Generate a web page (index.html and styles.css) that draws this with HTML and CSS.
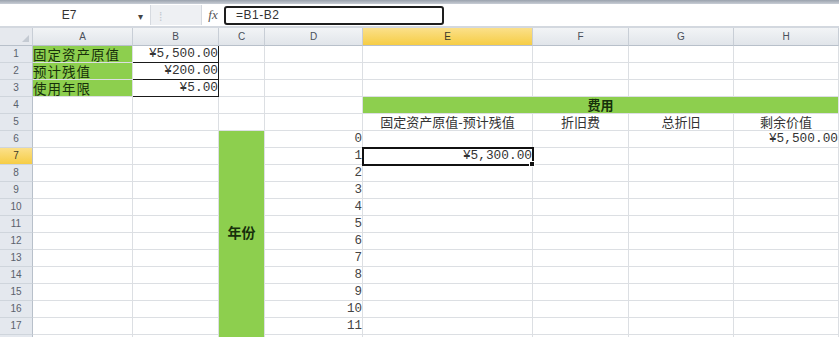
FILE: index.html
```html
<!DOCTYPE html>
<html lang="zh-CN">
<head>
    <meta charset="UTF-8">
    <meta name="viewport" content="width=device-width, initial-scale=1.0">
    <title>固定资产折旧</title>
    <link rel="stylesheet" href="styles.css">
</head>
<body>
    <div class="ribbon-edge"></div>

    <div class="formula-bar">
        <div class="name-box">E7</div>
        <div class="name-arrow">▾</div>
        <div class="fx-tools"><span class="grip">⁞</span></div>
        <div class="fx">fx</div>
        <div class="formula-input">=B1-B2</div>
    </div>

    <table class="sheet">
        <colgroup>
            <col class="c-head">
            <col class="c-a">
            <col class="c-b">
            <col class="c-c">
            <col class="c-d">
            <col class="c-e">
            <col class="c-f">
            <col class="c-g">
            <col class="c-h">
        </colgroup>
        <thead>
            <tr>
                <th class="corner"><span class="corner-mark"></span></th>
                <th>A</th><th>B</th><th>C</th><th>D</th>
                <th class="active">E</th><th>F</th><th>G</th><th>H</th>
            </tr>
        </thead>
        <tbody>
            <tr><th>1</th><td class="label">固定资产原值</td><td class="money boxed">¥5,500.00</td><td></td><td></td><td></td><td></td><td></td><td></td></tr>
            <tr><th>2</th><td class="label">预计残值</td><td class="money boxed">¥200.00</td><td></td><td></td><td></td><td></td><td></td><td></td></tr>
            <tr><th>3</th><td class="label">使用年限</td><td class="money boxed">¥5.00</td><td></td><td></td><td></td><td></td><td></td><td></td></tr>
            <tr><th>4</th><td></td><td></td><td></td><td></td><td class="band" colspan="4">费用</td></tr>
            <tr><th>5</th><td></td><td></td><td></td><td></td><td class="caption">固定资产原值-预计残值</td><td class="caption">折旧费</td><td class="caption">总折旧</td><td class="caption">剩余价值</td></tr>
            <tr><th>6</th><td></td><td></td><td class="year" rowspan="13">年份</td><td class="num">0</td><td></td><td></td><td></td><td class="money">¥5,500.00</td></tr>
            <tr><th class="active">7</th><td></td><td></td><td class="num">1</td><td class="money sel">¥5,300.00</td><td></td><td></td><td></td></tr>
            <tr><th>8</th><td></td><td></td><td class="num">2</td><td></td><td></td><td></td><td></td></tr>
            <tr><th>9</th><td></td><td></td><td class="num">3</td><td></td><td></td><td></td><td></td></tr>
            <tr><th>10</th><td></td><td></td><td class="num">4</td><td></td><td></td><td></td><td></td></tr>
            <tr><th>11</th><td></td><td></td><td class="num">5</td><td></td><td></td><td></td><td></td></tr>
            <tr><th>12</th><td></td><td></td><td class="num">6</td><td></td><td></td><td></td><td></td></tr>
            <tr><th>13</th><td></td><td></td><td class="num">7</td><td></td><td></td><td></td><td></td></tr>
            <tr><th>14</th><td></td><td></td><td class="num">8</td><td></td><td></td><td></td><td></td></tr>
            <tr><th>15</th><td></td><td></td><td class="num">9</td><td></td><td></td><td></td><td></td></tr>
            <tr><th>16</th><td></td><td></td><td class="num">10</td><td></td><td></td><td></td><td></td></tr>
            <tr><th>17</th><td></td><td></td><td class="num">11</td><td></td><td></td><td></td><td></td></tr>
            <tr><th></th><td></td><td></td><td></td><td></td><td></td><td></td><td></td></tr>
        </tbody>
    </table>
</body>
</html>
```

FILE: styles.css
```css
body {
    margin: 0;
    width: 839px;
    height: 337px;
    overflow: hidden;
    background-color: #ffffff;
    font-family: 'Noto Sans CJK SC', sans-serif;
    color: #222;
}

/* bord du ruban */
.ribbon-edge {
    height: 4px;
    background: linear-gradient(#9aa2ad, #c9ced6);
}

.formula-bar {
    display: flex;
    align-items: center;
    height: 22px;
    background-color: #ffffff;
    border-bottom: 2px solid #d3d8df;
}
.name-box {
    width: 138px;
    text-align: center;
    font-family: 'Liberation Sans', sans-serif;
    font-size: 12px;
    color: #333;
}
.name-arrow {
    width: 12px;
    font-size: 10px;
    color: #444;
}
.fx-tools {
    width: 50px;
    height: 20px;
    background-color: #eef0f3;
    border-left: 1px solid #d6dae0;
    border-right: 1px solid #d6dae0;
    display: flex;
    align-items: center;
}
.grip {
    margin-left: 8px;
    color: #c3c8cf;
    font-size: 12px;
}
.fx {
    width: 22px;
    text-align: center;
    font-family: 'Liberation Serif', serif;
    font-style: italic;
    font-size: 13px;
    color: #555;
}
.formula-input {
    width: 206px;
    height: 15px;
    line-height: 15px;
    padding-left: 10px;
    border: 2px solid #1e1e1e;
    border-radius: 3px;
    font-family: 'Liberation Sans', sans-serif;
    font-size: 12px;
    letter-spacing: 0.5px;
    color: #333;
}

.sheet {
    table-layout: fixed;
    width: 839px;
    border-collapse: separate;
    border-spacing: 0;
}
.c-head { width: 33px; }
.c-a { width: 100px; }
.c-b { width: 86px; }
.c-c { width: 46px; }
.c-d { width: 98px; }
.c-e { width: 170px; }
.c-f { width: 96px; }
.c-g { width: 105px; }
.c-h { width: 105px; }

.sheet th,
.sheet td {
    padding: 0;
    border-right: 1px solid #dcdfe3;
    border-bottom: 1px solid #dcdfe3;
    white-space: nowrap;
}
.sheet tbody tr {
    height: 17px;
}
.sheet thead th {
    height: 17px;
    background: linear-gradient(#f2f4f6, #e1e5ea);
    border-right: 1px solid #c8ced6;
    border-bottom: 1px solid #b8c0ca;
    font-family: 'Liberation Sans', sans-serif;
    font-weight: normal;
    font-size: 10px;
    color: #4a505a;
}
.sheet tbody th {
    background-color: #e4e8ee;
    border-right: 1px solid #b8c0ca;
    border-bottom: 1px solid #cfd5dc;
    font-family: 'Liberation Sans', sans-serif;
    font-weight: normal;
    font-size: 10px;
    line-height: 16px;
    color: #5a616c;
}
.sheet thead th.active,
.sheet tbody th.active {
    background: linear-gradient(#fbe08a, #f6cd45);
    color: #3a3a2a;
}
.sheet thead th.corner {
    position: relative;
    background: #e6e9ee;
}
.corner-mark {
    position: absolute;
    right: 3px;
    bottom: 3px;
    border-left: 7px solid transparent;
    border-bottom: 7px solid #c4cad2;
}

.sheet td {
    font-size: 13px;
    line-height: 16px;
    vertical-align: bottom;
}
.label {
    background-color: #8dcf4e;
    border-right: 1px solid #1a1a1a;
    border-bottom: 1px solid #1a1a1a;
    padding-left: 2px;
    letter-spacing: 1px;
    color: #17300b;
}
.sheet td.label {
    font-size: 13.5px;
}
.money {
    text-align: right;
    padding-right: 2px;
    font-family: 'Liberation Mono', monospace;
    color: #333;
}
.sheet td.money {
    font-size: 12.8px;
}
.sheet td.boxed {
    border-right: 1px solid #1a1a1a;
    border-bottom: 1px solid #1a1a1a;
}
.band {
    background-color: #8dcf4e;
    text-align: center;
    font-weight: bold;
    color: #17300b;
}
.caption {
    text-align: center;
    color: #333;
}
.sheet td.year {
    background-color: #8dcf4e;
    text-align: center;
    font-weight: bold;
    font-size: 14px;
    color: #17300b;
    padding-bottom: 18px;
    vertical-align: middle;
}
.num {
    text-align: right;
    padding-right: 5px;
    font-family: 'Liberation Mono', monospace;
    color: #444;
}
.sheet td.num {
    font-size: 12.5px;
}
.sel {
    position: relative;
    outline: 2px solid #111;
    outline-offset: -1px;
}
.sel::after {
    content: '';
    position: absolute;
    right: -3px;
    bottom: -3px;
    width: 4px;
    height: 4px;
    background-color: #111;
    border: 1px solid #fff;
}
```
